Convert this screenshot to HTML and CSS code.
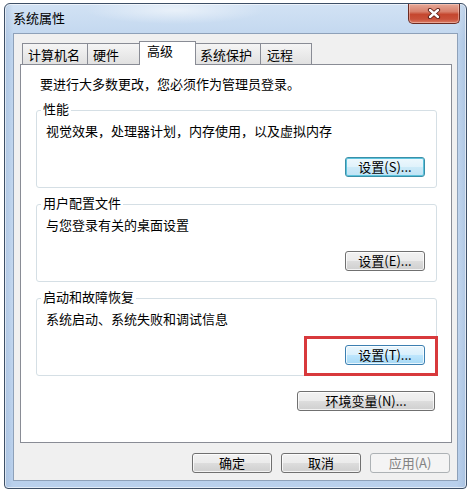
FILE: index.html
```html
<!DOCTYPE html>
<html lang="zh-CN">
<head>
<meta charset="utf-8">
<title>系统属性</title>
<link rel="stylesheet" href="styles.css">
</head>
<body>
<div class="window">
  <div class="titlebar">
    <span class="title">系统属性</span>
    <div class="close">
      <svg width="14" height="11" viewBox="0 0 14 11">
        <path d="M3 2 L11 9 M11 2 L3 9" stroke="#5a1c14" stroke-width="4.2" stroke-linecap="round"/>
        <path d="M3 2 L11 9 M11 2 L3 9" stroke="#ffffff" stroke-width="2.4" stroke-linecap="round"/>
      </svg>
    </div>
  </div>
  <div class="client">
    <div class="tabs">
      <div class="tab t1">计算机名</div>
      <div class="tab t2">硬件</div>
      <div class="tab active">高级</div>
      <div class="tab t4">系统保护</div>
      <div class="tab t5">远程</div>
    </div>
    <div class="panel">
      <p class="intro">要进行大多数更改，您必须作为管理员登录。</p>
      <div class="group">
        <div class="group-title">性能</div>
        <div class="group-desc">视觉效果，处理器计划，内存使用，以及虚拟内存</div>
        <div class="group-actions"><button class="btn focus">设置(S)...</button></div>
      </div>
      <div class="group">
        <div class="group-title">用户配置文件</div>
        <div class="group-desc">与您登录有关的桌面设置</div>
        <div class="group-actions"><button class="btn">设置(E)...</button></div>
      </div>
      <div class="group">
        <div class="group-title">启动和故障恢复</div>
        <div class="group-desc">系统启动、系统失败和调试信息</div>
        <div class="group-actions"><button class="btn hot">设置(T)...</button></div>
        <div class="highlight"></div>
      </div>
      <div class="env-row"><button class="btn wide">环境变量(N)...</button></div>
    </div>
    <div class="footer">
      <button class="btn">确定</button>
      <button class="btn">取消</button>
      <button class="btn disabled">应用(A)</button>
    </div>
  </div>
</div>
</body>
</html>
```

FILE: styles.css
```css
body {
  margin: 0;
  background: #ffffff;
  font-family: "Noto Sans CJK SC", "Noto Sans", sans-serif;
  font-size: 13px;
  color: #000000;
}

.window {
  box-sizing: border-box;
  width: 463px;
  height: 486px;
  margin: 3px 0 0 4px;
  border: 1px solid #3d4f66;
  border-radius: 6px 6px 4px 4px;
  background:
    radial-gradient(ellipse 90px 14px at 170px 6px, rgba(255,255,255,0.55), rgba(255,255,255,0)),
    linear-gradient(90deg, rgba(120,150,190,0.25) 0, rgba(255,255,255,0) 8px, rgba(255,255,255,0) 452px, rgba(120,150,190,0.25) 461px),
    linear-gradient(180deg, #d2e2f4 0%, #bfd5ee 8%, #c4d8f0 60%, #b9d0ec 100%);
  box-shadow: inset 0 0 0 1px rgba(255,255,255,0.6);
  padding: 0 8px 7px 8px;
  display: flex;
  flex-direction: column;
}

.titlebar {
  height: 29px;
  flex-shrink: 0;
  display: flex;
  align-items: flex-start;
}

.title {
  margin-top: 6px;
  line-height: 16px;
  color: #000;
}

.close {
  box-sizing: border-box;
  margin-left: auto;
  margin-right: -2px;
  width: 52px;
  height: 20px;
  border: 1px solid #6b2b22;
  border-top: none;
  border-radius: 0 0 5px 5px;
  background: linear-gradient(180deg, #e6a896 0%, #d8806c 40%, #c5472f 55%, #c9513a 80%, #db7d66 100%);
  box-shadow: inset 0 0 0 1px rgba(255,220,210,0.45);
  display: flex;
  align-items: center;
  justify-content: center;
}

.client {
  flex: 1;
  min-height: 0;
  border: 1px solid #8ea1b9;
  background: #f0f0f0;
  padding: 7px 5px 7px 6px;
  display: flex;
  flex-direction: column;
}

.tabs {
  height: 23px;
  flex-shrink: 0;
  margin-left: 2px;
  display: flex;
  align-items: flex-end;
}

.tab {
  box-sizing: border-box;
  height: 21px;
  border: 1px solid #898c95;
  border-bottom: none;
  background: linear-gradient(180deg, #f5f5f5 0%, #ebebeb 50%, #e1e1e1 100%);
  padding: 2px 0 0 5px;
  line-height: 18px;
  white-space: nowrap;
}

.tab + .tab {
  margin-left: -1px;
}

.t1 { width: 66px; }
.t2 { width: 53px; }
.t4 { width: 66px; padding-left: 4px; }
.t5 { width: 52px; padding-left: 6px; }

.tab.active {
  width: 57px;
  height: 24px;
  margin-bottom: -1px;
  background: #ffffff;
  padding: 0 0 0 7px;
  position: relative;
  z-index: 1;
}

.panel {
  flex: 1;
  min-height: 0;
  background: #ffffff;
  border: 1px solid #898c95;
  padding: 11px 14px 0 15px;
}

.intro {
  margin: 0 0 0 4px;
  line-height: 16px;
}

.group {
  position: relative;
  margin-top: 16px;
  border: 1px solid #d5dfe5;
  border-radius: 3px;
  padding: 0 11px 10px 9px;
}

.intro + .group {
  margin-top: 18px;
}

.group-title {
  width: fit-content;
  margin: -10px 0 0 -5px;
  padding: 0 2px;
  background: #ffffff;
  line-height: 16px;
}

.group-desc {
  margin-top: 6px;
  line-height: 16px;
}

.group-actions {
  margin-top: 18px;
  display: flex;
  justify-content: flex-end;
}

.highlight {
  position: absolute;
  right: -2px;
  bottom: -1px;
  width: 134px;
  height: 40px;
  box-sizing: border-box;
  border: 3px solid #d8393c;
}

.env-row {
  margin-top: 15px;
  padding-right: 2px;
  display: flex;
  justify-content: flex-end;
}

.footer {
  flex-shrink: 0;
  margin-top: 10px;
  padding-right: 2px;
  display: flex;
  justify-content: flex-end;
  gap: 9px;
}

.btn {
  box-sizing: border-box;
  width: 80px;
  height: 20px;
  padding: 0;
  border: 1px solid #707070;
  border-radius: 3px;
  background: linear-gradient(180deg, #f2f2f2 0%, #ebebeb 50%, #dddddd 51%, #cfcfcf 100%);
  box-shadow: inset 0 0 0 1px rgba(255,255,255,0.75);
  font-family: "Noto Sans CJK SC", "Noto Sans", sans-serif;
  font-size: 13px;
  line-height: 16px;
  color: #000000;
  white-space: nowrap;
}

.btn.wide {
  width: 138px;
}

.btn.hot {
  border-color: #3c7fb1;
  background: linear-gradient(180deg, #eaf6fd 0%, #d9f0fc 50%, #bee6fd 51%, #a7d9f5 100%);
}

.btn.focus {
  border-color: #3a8fa8;
  background: linear-gradient(180deg, #eef8fd 0%, #e0f2fb 50%, #cdeaf8 51%, #bfe3f5 100%);
  box-shadow: inset 0 0 0 1px #5cc3dc;
}

.btn.disabled {
  border-color: #adb2b5;
  background: #f4f4f4;
  box-shadow: none;
  color: #838383;
}
```
